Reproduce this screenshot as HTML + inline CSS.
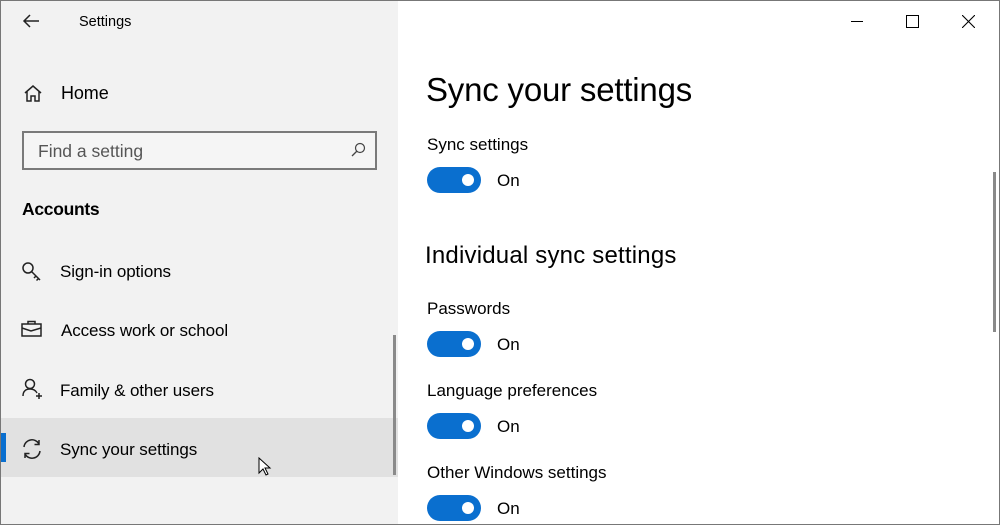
<!DOCTYPE html>
<html><head><meta charset="utf-8"><style>
body{margin:0;width:1000px;height:525px;overflow:hidden;background:#fff;font-family:"Liberation Sans",sans-serif;color:#000;position:relative}
.a{position:absolute;white-space:nowrap}
#side{position:absolute;left:0;top:0;width:398px;height:525px;background:#f2f2f2}
.tg{position:absolute;left:427px;width:54px;height:26px;border-radius:13px;background:#0a6fcf}
.tg::after{content:"";position:absolute;right:7px;top:7px;width:12px;height:12px;border-radius:50%;background:#fff}
.on{position:absolute;left:497px;font-size:17px}
.lbl{font-size:17px}
.nav{font-size:17px;letter-spacing:-0.1px}
</style></head><body>
<div id="side"></div>
<div class="a" style="left:0;top:418px;width:398px;height:59px;background:#e1e1e1"></div>
<div class="a" style="left:0;top:433px;width:6px;height:29px;background:#0a6fcf"></div>
<div class="a" style="left:393px;top:335px;width:3px;height:140px;background:#8a8a8a"></div>
<div class="a" style="left:993px;top:172px;width:3px;height:160px;background:#8a8a8a"></div>
<div class="a" style="left:0;top:0;width:998px;height:523px;border:1px solid #777;"></div>

<svg class="a" style="left:22px;top:13px" width="18" height="16" viewBox="0 0 18 16"><path d="M17 8H2M8 2L2 8l6 6" fill="none" stroke="#222" stroke-width="1.5"/></svg>
<div class="a" style="left:79px;top:14px;font-size:14.5px">Settings</div>

<svg class="a" style="left:23px;top:84px" width="20" height="18" viewBox="0 0 20 18"><path d="M2 9L10 2l8 7M4 7.5V17h4v-5h4v5h4V7.5" fill="none" stroke="#222" stroke-width="1.5"/></svg>
<div class="a nav" style="left:61px;top:83px;font-size:18px">Home</div>

<div class="a" style="left:22px;top:131px;width:351px;height:35px;border:2px solid #7a7a7a;background:#f5f5f5"></div>
<div class="a" style="left:38px;top:141px;font-size:17.5px;color:#555">Find a setting</div>
<svg class="a" style="left:350px;top:142px" width="16" height="16" viewBox="0 0 16 16"><circle cx="10" cy="6" r="4.5" fill="none" stroke="#444" stroke-width="1.2"/><path d="M7 9L2 14" stroke="#444" stroke-width="1.3"/></svg>

<div class="a" style="left:22px;top:199px;font-size:17.5px;font-weight:bold;letter-spacing:-0.3px">Accounts</div>

<svg class="a" style="left:21px;top:261px" width="22" height="22" viewBox="0 0 22 22"><circle cx="7" cy="7" r="5" fill="none" stroke="#222" stroke-width="1.5"/><path d="M10.5 10.5L19 19M15 15l-2 2M17.5 17.5l-2 2" fill="none" stroke="#222" stroke-width="1.5"/></svg>
<div class="a nav" style="left:60px;top:262px">Sign-in options</div>

<svg class="a" style="left:21px;top:320px" width="22" height="18" viewBox="0 0 22 18"><rect x="1" y="4" width="19" height="12" fill="none" stroke="#222" stroke-width="1.5"/><path d="M7 4V1.5h7V4M1 8l9 3 10-3" fill="none" stroke="#222" stroke-width="1.5"/></svg>
<div class="a nav" style="left:61px;top:321px">Access work or school</div>

<svg class="a" style="left:21px;top:378px" width="22" height="22" viewBox="0 0 22 22"><circle cx="9" cy="6" r="4.5" fill="none" stroke="#222" stroke-width="1.5"/><path d="M2 18c0-5 3-7 7-7s6 2 7 4M15 18h6M18 15v6" fill="none" stroke="#222" stroke-width="1.5"/></svg>
<div class="a nav" style="left:60px;top:381px">Family &amp; other users</div>

<svg class="a" style="left:21px;top:438px" width="22" height="22" viewBox="0 0 22 22"><path d="M3 9a8 8 0 0 1 15-3M19 13a8 8 0 0 1-15 3M18 2v4.5h-4.5M4 20v-4.5h4.5" fill="none" stroke="#222" stroke-width="1.5"/></svg>
<div class="a nav" style="left:60px;top:440px">Sync your settings</div>
<svg class="a" style="left:258px;top:457px" width="14" height="20" viewBox="0 0 14 20"><path d="M1 1v15l4-4 3 6 2-1-3-6h5z" fill="#fff" stroke="#000" stroke-width="1"/></svg>

<div class="a" style="left:851px;top:21px;width:12px;height:1px;background:#000"></div>
<div class="a" style="left:906px;top:15px;width:11px;height:11px;border:1px solid #000"></div>
<svg class="a" style="left:962px;top:15px" width="13" height="13" viewBox="0 0 13 13"><path d="M0 0L13 13M13 0L0 13" stroke="#000" stroke-width="1.1"/></svg>

<div class="a" style="left:426px;top:71px;font-size:33px;letter-spacing:-0.2px">Sync your settings</div>
<div class="a lbl" style="left:427px;top:135px">Sync settings</div>
<div class="tg" style="top:167px"></div><div class="on" style="top:171px">On</div>

<div class="a" style="left:425px;top:242px;font-size:24px;letter-spacing:0.2px">Individual sync settings</div>
<div class="a lbl" style="left:427px;top:299px">Passwords</div>
<div class="tg" style="top:331px"></div><div class="on" style="top:335px">On</div>
<div class="a lbl" style="left:427px;top:381px">Language preferences</div>
<div class="tg" style="top:413px"></div><div class="on" style="top:417px">On</div>
<div class="a lbl" style="left:427px;top:463px">Other Windows settings</div>
<div class="tg" style="top:495px"></div><div class="on" style="top:499px">On</div>
</body></html>
